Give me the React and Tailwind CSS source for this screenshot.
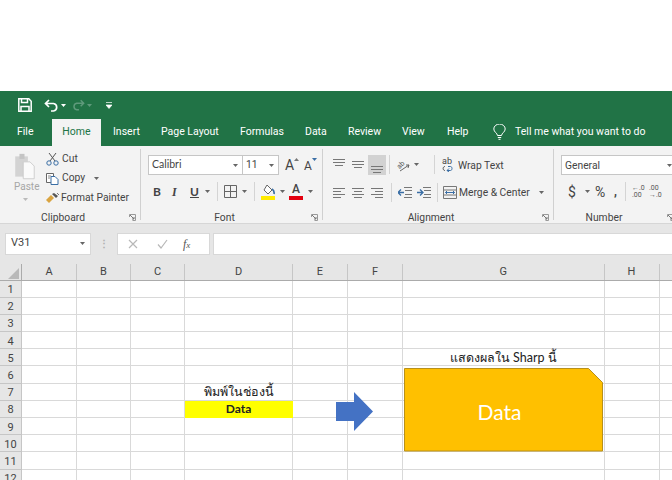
import React from 'react';

const UI = { fontFamily: 'Roboto, "Noto Sans", sans-serif' };
const CALIBRI = { fontFamily: 'Lato, "Noto Sans", sans-serif' };

const COLUMNS = [
  ['A', 55], ['B', 54], ['C', 54], ['D', 108], ['E', 55], ['F', 55], ['G', 201.5], ['H', 55], ['', 70],
];
const ROWS = [1, 2, 3, 4, 5, 6, 7, 8, 9, 10, 11, 12];

const Caret = ({ className = '' }) => (
  <svg width="5" height="3" viewBox="0 0 5 3" className={className}><path d="M0 0h5L2.5 3z" fill="#666" /></svg>
);

const Sep = () => <div className="w-px h-[19px] bg-[#d4d4d4]" />;

const Launcher = ({ className = 'right-[4px]' }) => (
  <svg width="7" height="7" viewBox="0 0 7 7" className={`absolute bottom-[-1px] ${className}`}>
    <path d="M.5 3V.5H6.500V6.500H3.500" fill="none" stroke="#999" />
    <path d="M1 1l4 4M3 5h2V3" fill="none" stroke="#777" />
  </svg>
);

const Lines = ({ rows }) => (
  <svg width="13" height="13" viewBox="0 0 13 13">
    {rows.map(([y, x1, x2], i) => (
      <path key={i} d={`M${x1} ${y + 0.5}H${x2}`} stroke="#777" />
    ))}
  </svg>
);

const TopTab = ({ children, className = '' }) => (
  <span className={`text-[10.500px] leading-none text-white pb-[1px] ${className}`}>{children}</span>
);

const GroupLabel = ({ children }) => (
  <div className="absolute left-0 right-0 bottom-[-5px] pr-[14px] text-center leading-[14px] text-[#444]">{children}</div>
);

export default function App() {
  return (
    <div className="w-[672px] h-[480px] overflow-hidden bg-white" style={UI}>
      <div className="h-[91px] bg-white" />

      {/* title bar */}
      <div className="h-[28px] bg-[#217346] flex items-center pl-[18px]">
        <svg width="14" height="14" viewBox="0 0 14 14">
          <path d="M.8.8h10l2.400 2.400v10H.8z" fill="none" stroke="#fff" strokeWidth="1.500" />
          <path d="M3.500 1v3.500h6V1M3 13V8.500h8V13" fill="none" stroke="#fff" strokeWidth="1.500" />
        </svg>
        <svg width="15" height="13" viewBox="0 0 15 13" className="ml-[12px]">
          <path d="M5 1L1.500 4.500 5 8M2 4.500h7.500a3.800 3.800 0 0 1 0 7.500H7" fill="none" stroke="#fff" strokeWidth="1.700" />
        </svg>
        <svg width="5" height="3" viewBox="0 0 5 3" className="ml-[2px]"><path d="M0 0h5L2.500 3z" fill="#fff" /></svg>
        <svg width="13" height="12" viewBox="0 0 15 13" className="ml-[6px]">
          <path d="M10 1l3.500 3.500L10 8M13 4.500H5.500a3.800 3.800 0 0 0 0 7.500H8" fill="none" stroke="#5f9a7b" strokeWidth="1.700" />
        </svg>
        <svg width="5" height="3" viewBox="0 0 5 3" className="ml-[2px]"><path d="M0 0h5L2.500 3z" fill="#5f9a7b" /></svg>
        <svg width="6" height="7" viewBox="0 0 6 7" className="ml-[14px]">
          <path d="M0 .5h6M0 3h6l-3 3.500z" fill="#fff" stroke="#fff" strokeWidth=".7" />
        </svg>
      </div>

      {/* tabs */}
      <div className="h-[27px] bg-[#217346] flex items-center">
        <TopTab className="ml-[17px] w-[35px]">File</TopTab>
        <div className="w-[49px] h-[27px] bg-[#f3f3f3] flex items-center justify-center pb-[1px] text-[10.500px] text-[#217346]">Home</div>
        <TopTab className="ml-[12px] w-[48px]">Insert</TopTab>
        <TopTab className="w-[79px]">Page Layout</TopTab>
        <TopTab className="w-[65px]">Formulas</TopTab>
        <TopTab className="w-[43px]">Data</TopTab>
        <TopTab className="w-[54px]">Review</TopTab>
        <TopTab className="w-[45px]">View</TopTab>
        <TopTab className="w-[46px]">Help</TopTab>
        <svg width="13" height="16" viewBox="0 0 13 16" className="mr-[9px] mb-[2px]">
          <path d="M4.500 11.500C4.300 9 .8 8 .8 5a5.700 5 0 0 1 11.400 0c0 3-3.500 4-3.700 6.500zM4.800 13.500h3.400M5.500 15.300h2" fill="none" stroke="#fff" />
        </svg>
        <TopTab>Tell me what you want to do</TopTab>
      </div>

      {/* ribbon */}
      <div className="h-[78px] bg-[#f3f3f3] flex border-b border-[#d6d6d6] text-[#444] text-[10.300px]">
        {/* clipboard */}
        <div className="relative w-[141px] shrink-0 border-r border-[#d0d0d0] my-[3px] flex">
          <div className="w-[41px] pl-[14px] flex flex-col items-start">
            <svg width="21" height="27" viewBox="0 0 24 32" className="mt-[4px]">
              <rect x="1" y="4" width="15" height="24" fill="#d3d3d3" />
              <rect x="6" y="1" width="6" height="6" fill="#c4c4c4" />
              <path d="M10.500 10.500h8l5 5v15h-13z" fill="#fafafa" stroke="#c8c8c8" />
            </svg>
            <span className="text-[10px] leading-none mt-[2px] text-[#a6a6a6]">Paste</span>
            <Caret className="ml-[9px] mt-[6px] opacity-40" />
          </div>
          <div className="pl-[5px] flex flex-col">
            <div className="h-[19px] flex items-center gap-[3px]">
              <svg width="13" height="14" viewBox="0 0 13 14">
                <path d="M3 1l6 8M10 1L4 9" stroke="#555" fill="none" />
                <circle cx="3" cy="11" r="2.200" fill="none" stroke="#3a6ea5" />
                <circle cx="10" cy="11" r="2.200" fill="none" stroke="#3a6ea5" />
              </svg>
              <span>Cut</span>
            </div>
            <div className="h-[20px] flex items-center gap-[3px]">
              <svg width="13" height="13" viewBox="0 0 13 13">
                <path d="M.5 1.500h7v9h-7z" fill="#fff" stroke="#666" />
                <path d="M5 4.500h4l3 3v5H5z" fill="#fff" stroke="#3a6ea5" />
                <path d="M2 4h3M2 6h2" stroke="#888" />
              </svg>
              <span>Copy</span>
              <Caret className="ml-[6px]" />
            </div>
            <div className="h-[19px] flex items-center gap-[1px]">
              <svg width="14" height="12" viewBox="0 0 14 12">
                <path d="M0 8l5-5 3 3-5 5z" fill="#d9a441" />
                <path d="M6 2l2-1 4 3-2 2z" fill="#555" />
                <path d="M11 1l2 2" stroke="#777" />
              </svg>
              <span>Format Painter</span>
            </div>
          </div>
          <GroupLabel>Clipboard</GroupLabel>
          <Launcher />
        </div>

        {/* font */}
        <div className="relative w-[182px] shrink-0 border-r border-[#d0d0d0] my-[3px] pl-[7px] pt-[6px]">
          <div className="flex items-center">
            <div className="w-[95px] h-[20px] bg-white border border-[#c6c6c6] flex items-center justify-between pl-[3px] pr-[4px]">
              <span className="text-[10.500px]" style={CALIBRI}>Calibri</span><Caret />
            </div>
            <div className="w-[36px] h-[20px] bg-white border border-l-0 border-[#c6c6c6] flex items-center justify-between pl-[3px] pr-[4px]">
              <span>11</span><Caret />
            </div>
            <div className="ml-[6px] w-[19px] flex items-start">
              <span className="text-[14px] leading-none">A</span>
              <svg width="5" height="3" viewBox="0 0 5 3"><path d="M0 3h5L2.500 0z" fill="#777" /></svg>
            </div>
            <div className="flex items-start">
              <span className="text-[12px] leading-none mt-[2px]">A</span>
              <svg width="5" height="3" viewBox="0 0 5 3"><path d="M0 0h5L2.500 3z" fill="#3a6ea5" /></svg>
            </div>
          </div>
          <div className="flex items-center mt-[7px] h-[19px]">
            <span className="font-bold ml-[5px] w-[18px] text-[12px]" style={CALIBRI}>B</span>
            <span className="italic font-bold w-[19px] pl-[1px] text-[12px]" style={{ fontFamily: '"Liberation Serif", serif' }}>I</span>
            <span className="underline font-bold w-[15px] text-[12px]" style={CALIBRI}>U</span>
            <Caret />
            <div className="ml-[7px] mr-[6px]"><Sep /></div>
            <svg width="13" height="13" viewBox="0 0 13 13">
              <path d="M.5.5h12v12H.5zM6.500.5v12M.5 6.500h12" fill="none" stroke="#666" />
            </svg>
            <Caret className="ml-[5px]" />
            <div className="ml-[7px] mr-[6px]"><Sep /></div>
            <svg width="14" height="16" viewBox="0 0 14 16">
              <path d="M6 1l5 5-4 4-4-4z" fill="#fff" stroke="#666" />
              <path d="M11 5c1.500 1 2.500 2.500 2 5" stroke="#3a6ea5" fill="none" strokeWidth="1.700" />
              <rect x="0" y="12" width="14" height="4" fill="#ffeb00" />
            </svg>
            <Caret className="ml-[5px]" />
            <div className="ml-[4px] w-[14px] h-[17px] flex flex-col items-center">
              <span className="text-[12px] leading-[13px] font-medium">A</span>
              <div className="w-[14px] h-[4px] bg-[#e3000f]" />
            </div>
            <Caret className="ml-[5px]" />
          </div>
          <GroupLabel>Font</GroupLabel>
          <Launcher />
        </div>

        {/* alignment */}
        <div className="relative w-[231px] shrink-0 border-r border-[#d0d0d0] my-[3px] pl-[10px] pt-[5px]">
          <div className="flex items-center h-[21px]">
            <Lines rows={[[1, 0, 12], [4, 0, 12], [7, 2, 10]]} />
            <div className="w-[6px]" />
            <Lines rows={[[3, 0, 12], [6, 0, 12], [9, 2, 10]]} />
            <div className="ml-[3px] w-[18px] h-[20px] bg-[#d2d2d2] flex items-end justify-center pb-[2px]">
              <Lines rows={[[6, 0, 12], [9, 0, 12], [12, 2, 10]]} />
            </div>
            <div className="ml-[3px] mr-[6px]"><Sep /></div>
            <svg width="15" height="14" viewBox="0 0 15 14">
              <text x="1" y="9" fontSize="7" fontFamily="Roboto, sans-serif" fill="#555" transform="rotate(-45 5 7)">ab</text>
              <path d="M4 13l9-6M13 7l-3 0M13 7l-1 3" stroke="#666" fill="none" />
            </svg>
            <Caret className="ml-[3px]" />
            <div className="ml-[15px] mr-[7px]"><Sep /></div>
            <div className="flex flex-col items-start w-[13px] leading-none">
              <span className="text-[9px] leading-[7px]">ab</span>
              <svg width="13" height="7" viewBox="0 0 13 7">
                <path d="M3 1.500C.5 1.500 .5 5.500 3 5.500" fill="none" stroke="#555" />
                <path d="M6 1.500h2.500c2 0 2 4 0 4H5M7 3.500l-2 2 2 1.500" fill="none" stroke="#3a6ea5" />
              </svg>
            </div>
            <span className="ml-[3px] pt-[3px]">Wrap Text</span>
          </div>
          <div className="flex items-center h-[19px] mt-[8px]">
            <Lines rows={[[2, 0, 12], [5, 0, 8], [8, 0, 12], [11, 0, 8]]} />
            <div className="w-[6px]" />
            <Lines rows={[[2, 0, 12], [5, 2, 10], [8, 0, 12], [11, 2, 10]]} />
            <div className="w-[6px]" />
            <Lines rows={[[2, 0, 12], [5, 4, 12], [8, 0, 12], [11, 4, 12]]} />
            <div className="ml-[7px] mr-[6px]"><Sep /></div>
            <svg width="14" height="13" viewBox="0 0 14 13">
              <path d="M0 6.500h6M3 3.500l-3 3 3 3" fill="none" stroke="#3a6ea5" strokeWidth="1.300" />
              <path d="M6 1.500h8M7 4.500h7M7 8.500h7M6 11.500h8" stroke="#777" />
            </svg>
            <svg width="14" height="13" viewBox="0 0 14 13" className="ml-[5px]">
              <path d="M0 6.500h6M3 3.500l3 3-3 3" fill="none" stroke="#3a6ea5" strokeWidth="1.300" />
              <path d="M6 1.500h8M7 4.500h7M7 8.500h7M6 11.500h8" stroke="#777" />
            </svg>
            <div className="ml-[6px] mr-[5px]"><Sep /></div>
            <svg width="14" height="13" viewBox="0 0 14 13">
              <path d="M.5.5h13v12H.5zM.5 4h13M.5 9h13" fill="none" stroke="#777" />
              <path d="M2.500 6.500h9M4 5l-1.500 1.500L4 8M10 5l1.500 1.500L10 8" fill="none" stroke="#3a6ea5" />
            </svg>
            <span className="ml-[2px]">Merge &amp; Center</span>
            <Caret className="ml-[9px]" />
          </div>
          <GroupLabel>Alignment</GroupLabel>
          <Launcher />
        </div>

        {/* number */}
        <div className="relative flex-1 my-[3px] pl-[7px] pt-[6px] min-w-0">
          <div className="w-[115px] h-[20px] bg-white border border-[#c6c6c6] flex items-center justify-between pl-[3px] pr-[3px] pt-[1px]">
            <span>General</span><Caret />
          </div>
          <div className="flex items-center mt-[7px] h-[19px]">
            <span className="ml-[7px] text-[14px] leading-none w-[17px]">$</span>
            <Caret />
            <span className="ml-[5px] text-[14px] leading-none w-[18px]">%</span>
            <span className="font-bold w-[12px] pl-[1px] text-[12px] leading-none">,</span>
            <div className="mr-[6px]"><Sep /></div>
            <span className="text-[7px] leading-[7px] w-[17px] text-[#555]">←.0<br />.00</span>
            <span className="text-[7px] leading-[7px] text-[#555]">.00<br />→.0</span>
          </div>
          <div className="absolute left-0 w-[100px] bottom-[-5px] text-center leading-[14px]">Number</div>
          <Launcher className="right-[-2px]" />
        </div>
      </div>

      {/* formula bar */}
      <div className="h-[40px] bg-[#e6e6e6] flex items-center pl-[5px] pb-[1px]">
        <div className="w-[86px] h-[22px] bg-white border border-[#d8d8d8] flex items-center justify-between pl-[5px] pr-[5px] text-[11px] text-[#444]">
          <span>V31</span><Caret />
        </div>
        <div className="w-[26px] flex justify-center">
          <span className="text-[10px] leading-none text-[#b0b0b0] font-bold">⋮</span>
        </div>
        <div className="w-[93px] h-[22px] bg-white border border-[#d8d8d8] flex items-center pl-[10px]">
          <svg width="10" height="10" viewBox="0 0 10 10"><path d="M1 1l8 8M9 1L1 9" stroke="#b8b8b8" strokeWidth="1.200" /></svg>
          <svg width="11" height="10" viewBox="0 0 11 10" className="ml-[19px]"><path d="M1 5.500L4 9l6-8" fill="none" stroke="#b8b8b8" strokeWidth="1.200" /></svg>
          <span className="ml-[15px] text-[12px] italic leading-none text-[#555]" style={{ fontFamily: '"Liberation Serif", serif' }}>f<span className="text-[9px]">x</span></span>
        </div>
        <div className="ml-[3px] flex-1 h-[22px] bg-white border border-[#d8d8d8] border-r-0" />
      </div>

      {/* sheet */}
      <div className="relative">
        <div className="flex h-[16.500px] bg-[#e6e6e6] border-b border-[#ababab] text-[11px] text-[#444]">
          <div className="w-[22px] shrink-0 border-r border-[#ababab] relative">
            <svg width="11" height="11" viewBox="0 0 11 11" className="absolute right-[2px] bottom-[1px]"><path d="M11 0v11H0z" fill="#b9b9b9" /></svg>
          </div>
          {COLUMNS.map(([name, width]) => (
            <div key={name || 'rest'} className="shrink-0 border-r border-[#c6c6c6] flex items-center justify-center leading-none" style={{ width }}>
              {name}
            </div>
          ))}
        </div>
        {ROWS.map((row) => (
          <div key={row} className="flex h-[17.200px]">
            <div className="w-[22px] shrink-0 bg-[#e6e6e6] border-r border-b border-[#c6c6c6] flex items-center justify-center pt-[2px] text-[11px] leading-none text-[#444]">
              {row}
            </div>
            {COLUMNS.map(([name, width]) => {
              const yellow = row === 8 && name === 'D';
              return (
                <div
                  key={name || 'rest'}
                  className={`shrink-0 flex items-center justify-center pt-[1px] whitespace-nowrap text-[12.500px] leading-none text-[#222] border-b border-r ${yellow ? 'bg-[#ffff00] border-[#ffff00]' : 'border-[#d9d9d9]'}`}
                  style={{ width, ...CALIBRI }}
                >
                  {row === 7 && name === 'D' && <span>พิมพ์ในช่องนี้</span>}
                  {yellow && <span className="font-bold text-[12px]">Data</span>}
                  {row === 5 && name === 'G' && <span>แสดงผลใน Sharp นี้</span>}
                </div>
              );
            })}
          </div>
        ))}

        {/* drawn shapes over the cells */}
        <svg width="38" height="40" viewBox="0 0 38 40" className="absolute left-[336px] top-[128px]">
          <path d="M0 10h18V0l19 19.500L18 39V29H0z" fill="#4472c4" />
        </svg>
        <div className="absolute left-[404px] top-[104px] w-[199px] h-[84px]">
          <svg width="199" height="84" viewBox="0 0 199 84" className="absolute inset-0">
            <path d="M.5.5H184.500L198.500 14.500V83H.5z" fill="#ffc000" stroke="#b8901a" />
          </svg>
          <div className="absolute inset-0 flex items-center justify-center pr-[8px] pt-[4px] text-[21px] text-white" style={CALIBRI}>Data</div>
        </div>
      </div>
    </div>
  );
}
